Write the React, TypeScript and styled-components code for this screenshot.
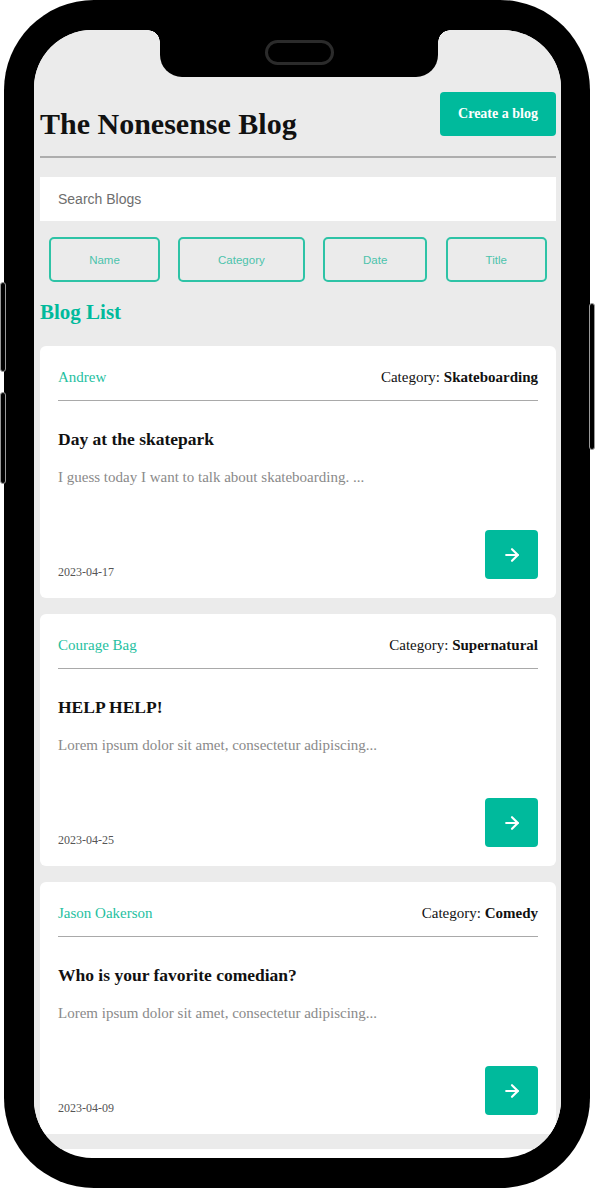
import React from "react";
import styled, { createGlobalStyle } from "styled-components";
import { ArrowRight } from "lucide-react";

const Global = createGlobalStyle`
  html, body { margin: 0; padding: 0; background: #ffffff; }
  body { font-family: "Liberation Serif", "Times New Roman", serif; }
  * { box-sizing: border-box; }
`;

const TEAL = "#00ba9c";

const Stage = styled.div`
  width: 595px;
  height: 1188px;
  display: flex;
  align-items: flex-start;
  padding-left: 4px;
  background: #fff;
`;

const Phone = styled.div`
  position: relative;
  width: 586px;
  height: 1188px;
  background: #000;
  border-radius: 90px;
  padding: 30px 29px 30px 30px;
`;

const SideButton = styled.div<{ $side: "left" | "right"; $top: number; $h: number }>`
  position: absolute;
  top: ${(p) => p.$top}px;
  ${(p) => (p.$side === "left" ? "left: -4px;" : "right: -5px;")}
  width: 6px;
  height: ${(p) => p.$h}px;
  background: #000;
  border: 1px solid #9a9a9a;
  border-radius: 3px;
`;

const Screen = styled.div`
  position: relative;
  width: 527px;
  height: 1128px;
  background: #fff;
  border-radius: 58px;
  overflow: hidden;
`;

const Notch = styled.div`
  position: absolute;
  top: 0;
  left: 126px;
  width: 278px;
  height: 47px;
  background: #000;
  border-radius: 0 0 22px 22px;
  display: flex;
  justify-content: center;
  align-items: flex-start;
  padding-top: 10px;
  &::before,
  &::after {
    content: "";
    position: absolute;
    top: 0;
    width: 12px;
    height: 12px;
  }
  &::before {
    left: -12px;
    background: radial-gradient(circle at 0 100%, transparent 11.5px, #000 12px);
  }
  &::after {
    right: -12px;
    background: radial-gradient(circle at 100% 100%, transparent 11.5px, #000 12px);
  }
`;

const Speaker = styled.div`
  width: 69px;
  height: 25px;
  border: 3px solid #2b2b2b;
  border-radius: 13px;
`;

const Page = styled.div`
  background: #ebebeb;
  padding: 62px 5px 15px 6px;
  display: flex;
  flex-direction: column;
`;

const Header = styled.header`
  display: flex;
  justify-content: space-between;
  align-items: flex-end;
  padding-bottom: 20px;
  border-bottom: 2px solid #adadad;
`;

const Title = styled.h1`
  margin: 0;
  font-family: "Liberation Serif", "Times New Roman", serif;
  font-weight: 700;
  font-size: 30px;
  line-height: 30px;
  color: #111;
  margin-bottom: -3px;
`;

const CreateButton = styled.button`
  border: none;
  background: ${TEAL};
  color: #fff;
  font-family: "Liberation Serif", "Times New Roman", serif;
  font-weight: 700;
  font-size: 14px;
  height: 44px;
  width: 116px;
  border-radius: 4px;
  padding: 0;
`;

const Search = styled.input`
  margin-top: 19px;
  height: 44px;
  border: none;
  outline: none;
  background: #fff;
  padding: 0 18px;
  font-family: "Liberation Sans", Arial, sans-serif;
  font-size: 14px;
  color: #333;
  &::placeholder { color: #6e6e6e; }
`;

const Filters = styled.div`
  margin-top: 16px;
  display: flex;
  justify-content: space-around;
`;

const FilterButton = styled.button`
  height: 45px;
  padding: 0 38px;
  background: transparent;
  border: 2px solid #2ec3a6;
  border-radius: 5px;
  color: #4cc3ab;
  font-family: "Liberation Sans", Arial, sans-serif;
  font-size: 11.5px;
`;

const ListTitle = styled.h2`
  margin: 18px 0 22px;
  font-family: "Liberation Serif", "Times New Roman", serif;
  font-weight: 700;
  font-size: 21px;
  line-height: 24px;
  color: ${TEAL};
`;

const List = styled.div`
  display: flex;
  flex-direction: column;
  gap: 16px;
`;

const Card = styled.article`
  background: #fff;
  border-radius: 6px;
  min-height: 252px;
  padding: 20px 18px 19px;
  display: flex;
  flex-direction: column;
`;

const CardHead = styled.div`
  display: flex;
  justify-content: space-between;
  align-items: baseline;
  line-height: 22px;
  font-size: 15px;
  padding-bottom: 12px;
  border-bottom: 1.5px solid #a9a9a9;
`;

const Author = styled.span`
  color: #1fbf9f;
  font-size: 15px;
`;

const Category = styled.span`
  color: #111;
  b { font-weight: 700; }
`;

const PostTitle = styled.h3`
  margin: 27px 0 0;
  font-size: 17.5px;
  line-height: 22px;
  font-weight: 700;
  color: #111;
`;

const Excerpt = styled.p`
  margin: 17px 0 0;
  font-size: 15px;
  line-height: 20px;
  color: #8a8a8a;
`;

const CardFoot = styled.div`
  margin-top: auto;
  display: flex;
  justify-content: space-between;
  align-items: flex-end;
`;

const DateText = styled.span`
  font-size: 12px;
  line-height: 13px;
  color: #555;
`;

const GoButton = styled.button`
  width: 53px;
  height: 49px;
  border: none;
  border-radius: 4px;
  background: ${TEAL};
  color: #fff;
  display: flex;
  align-items: center;
  justify-content: center;
  padding: 0;
`;

const posts = [
  {
    author: "Andrew",
    category: "Skateboarding",
    title: "Day at the skatepark",
    excerpt: "I guess today I want to talk about skateboarding. ...",
    date: "2023-04-17",
  },
  {
    author: "Courage Bag",
    category: "Supernatural",
    title: "HELP HELP!",
    excerpt: "Lorem ipsum dolor sit amet, consectetur adipiscing...",
    date: "2023-04-25",
  },
  {
    author: "Jason Oakerson",
    category: "Comedy",
    title: "Who is your favorite comedian?",
    excerpt: "Lorem ipsum dolor sit amet, consectetur adipiscing...",
    date: "2023-04-09",
  },
];

export default function App() {
  return (
    <Stage>
      <Global />
      <Phone>
        <SideButton $side="left" $top={282} $h={90} />
        <SideButton $side="left" $top={392} $h={92} />
        <SideButton $side="right" $top={303} $h={147} />
        <Screen>
          <Notch>
            <Speaker />
          </Notch>
          <Page>
            <Header>
              <Title>The Nonesense Blog</Title>
              <CreateButton>Create a blog</CreateButton>
            </Header>
            <Search placeholder="Search Blogs" />
            <Filters>
              <FilterButton>Name</FilterButton>
              <FilterButton>Category</FilterButton>
              <FilterButton>Date</FilterButton>
              <FilterButton>Title</FilterButton>
            </Filters>
            <ListTitle>Blog List</ListTitle>
            <List>
              {posts.map((p) => (
                <Card key={p.title}>
                  <CardHead>
                    <Author>{p.author}</Author>
                    <Category>
                      Category: <b>{p.category}</b>
                    </Category>
                  </CardHead>
                  <PostTitle>{p.title}</PostTitle>
                  <Excerpt>{p.excerpt}</Excerpt>
                  <CardFoot>
                    <DateText>{p.date}</DateText>
                    <GoButton aria-label="Open">
                      <ArrowRight size={20} strokeWidth={2.6} />
                    </GoButton>
                  </CardFoot>
                </Card>
              ))}
            </List>
          </Page>
        </Screen>
      </Phone>
    </Stage>
  );
}
